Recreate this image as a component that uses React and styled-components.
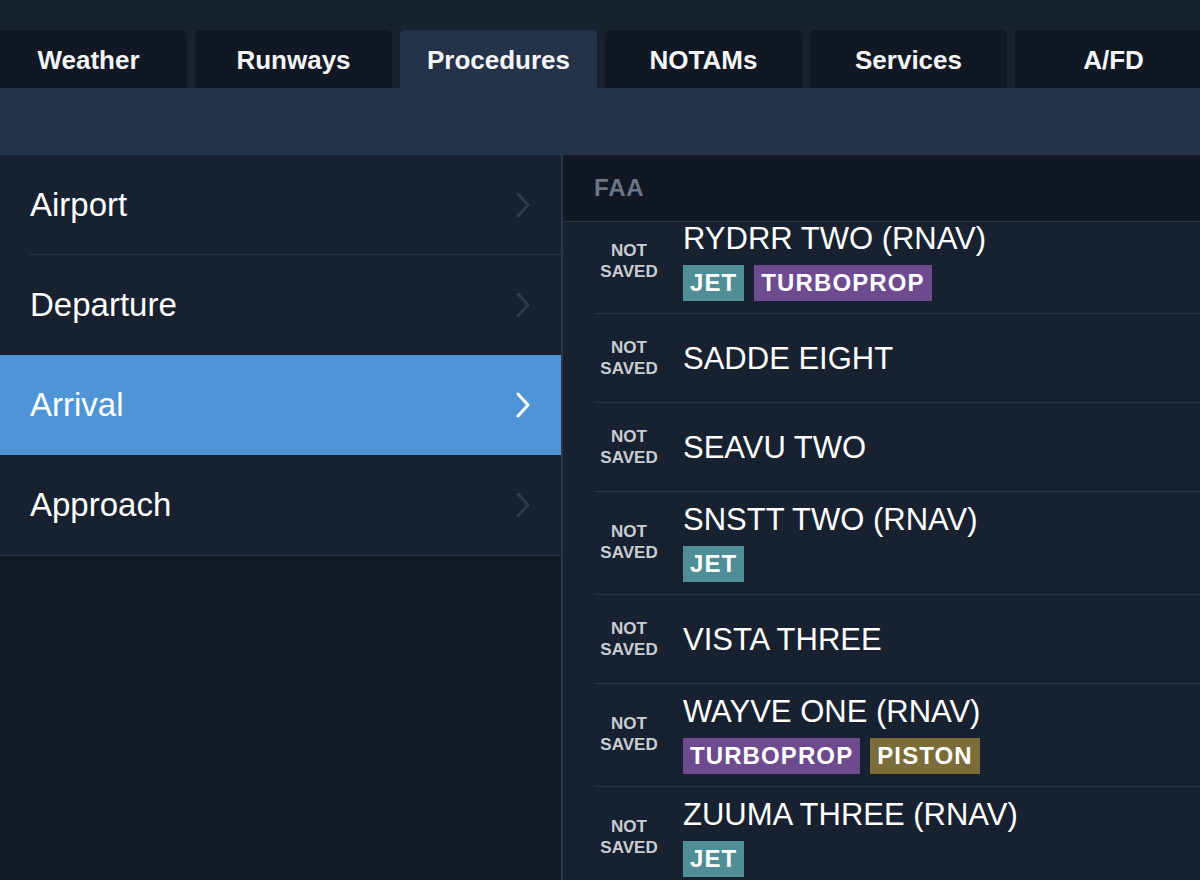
import React, { useEffect, useRef } from "react";
import styled, { createGlobalStyle } from "styled-components";

const GlobalStyle = createGlobalStyle`
  html, body {
    margin: 0;
    padding: 0;
    background: #121923;
  }
  body {
    font-family: "Liberation Sans", Arial, Helvetica, sans-serif;
    -webkit-font-smoothing: antialiased;
  }
`;

const COLOR_TOPBAR = "#18212e";
const COLOR_TAB = "#111824";
const COLOR_BAND = "#243349";
const COLOR_PANEL = "#172130";
const COLOR_LINE = "#2a3544";
const COLOR_SELECTED = "#4f95d5";

const BADGE_COLORS = {
  JET: "#4f8e96",
  TURBOPROP: "#6d4b8e",
  PISTON: "#7b6d39",
};

const Screen = styled.div`
  width: 1200px;
  height: 880px;
  overflow: hidden;
  display: flex;
  flex-direction: column;
  background: #121923;
`;

const TabStrip = styled.div`
  display: flex;
  gap: 8px;
  padding-top: 30px;
  margin-left: -10px;
  background: ${COLOR_TOPBAR};
  flex: 0 0 auto;
`;

const Tab = styled.div`
  flex: 0 0 197px;
  height: 58px;
  display: flex;
  align-items: center;
  justify-content: center;
  padding-top: 2px;
  box-sizing: border-box;
  border-radius: 5px 5px 0 0;
  background: ${(p) => (p.$active ? COLOR_BAND : COLOR_TAB)};
  color: #f4f5f7;
  font-size: 26px;
  font-weight: 700;
`;

const Band = styled.div`
  height: 67px;
  background: ${COLOR_BAND};
  flex: 0 0 auto;
`;

const Body = styled.div`
  flex: 1;
  display: flex;
  min-height: 0;
`;

const Sidebar = styled.div`
  width: 561px;
  flex: 0 0 561px;
  display: flex;
  flex-direction: column;
  background: #121923;
`;

const MenuList = styled.div`
  background: ${COLOR_PANEL};
  border-bottom: 1px solid ${COLOR_LINE};
`;

const MenuRow = styled.div`
  height: 100px;
  display: flex;
  align-items: center;
  justify-content: space-between;
  padding: 0 30px;
  background: ${(p) => (p.$selected ? COLOR_SELECTED : "transparent")};
  color: #ffffff;
  font-size: 33px;
  position: relative;

  &::after {
    content: "";
    display: ${(p) => (p.$divider ? "block" : "none")};
    position: absolute;
    left: 30px;
    right: 0;
    bottom: 0;
    height: 1px;
    background: ${COLOR_LINE};
  }
`;

const Chevron = ({ color }) => (
  <svg width="16" height="26" viewBox="0 0 16 26" fill="none">
    <polyline
      points="3,2 13,13 3,24"
      stroke={color}
      strokeWidth="3"
      strokeLinecap="round"
      strokeLinejoin="round"
    />
  </svg>
);

const Content = styled.div`
  flex: 1;
  display: flex;
  flex-direction: column;
  border-left: 2px solid #2b3646;
  background: ${COLOR_PANEL};
  min-width: 0;
`;

const SectionHeader = styled.div`
  height: 67px;
  flex: 0 0 67px;
  box-sizing: border-box;
  display: flex;
  align-items: center;
  padding-left: 31px;
  background: #111823;
  border-bottom: 1px solid ${COLOR_LINE};
  color: #6b7788;
  font-size: 24px;
  font-weight: 700;
  letter-spacing: 0.8px;
`;

const ProcList = styled.div`
  flex: 1;
  overflow: hidden;
`;

const ProcRow = styled.div`
  display: flex;
  align-items: center;
  min-height: 89px;
  box-sizing: border-box;
  padding: ${(p) => (p.$tall ? "9px 0 12px" : "10px 0")};
  margin-left: 31px;
  border-bottom: 1px solid ${COLOR_LINE};
`;

const Status = styled.div`
  width: 70px;
  flex: 0 0 70px;
  margin-right: 19px;
  text-align: center;
  color: #c9ced4;
  font-size: 17px;
  font-weight: 700;
  line-height: 21px;
`;

const ProcInfo = styled.div`
  display: flex;
  flex-direction: column;
  gap: 8px;
`;

const ProcName = styled.div`
  color: #ffffff;
  font-size: 31px;
  line-height: 37px;
  white-space: nowrap;
`;

const Badges = styled.div`
  display: flex;
  gap: 10px;
`;

const Badge = styled.span`
  display: inline-flex;
  align-items: center;
  height: 36px;
  padding: 0 7px;
  background: ${(p) => p.$color};
  color: #ffffff;
  font-size: 24px;
  font-weight: 700;
  letter-spacing: 1.1px;
`;

const TABS = ["Weather", "Runways", "Procedures", "NOTAMs", "Services", "A/FD"];

const MENU = ["Airport", "Departure", "Arrival", "Approach"];

const PROCEDURES = [
  { name: "RYDRR TWO (RNAV)", types: ["JET", "TURBOPROP"] },
  { name: "SADDE EIGHT", types: [] },
  { name: "SEAVU TWO", types: [] },
  { name: "SNSTT TWO (RNAV)", types: ["JET"] },
  { name: "VISTA THREE", types: [] },
  { name: "WAYVE ONE (RNAV)", types: ["TURBOPROP", "PISTON"] },
  { name: "ZUUMA THREE (RNAV)", types: ["JET"] },
];

export default function App() {
  const listRef = useRef(null);

  // list is scrolled a little past the first entry
  useEffect(() => {
    if (listRef.current) listRef.current.scrollTop = 11;
  }, []);

  const selected = "Arrival";

  return (
    <Screen>
      <GlobalStyle />
      <TabStrip>
        {TABS.map((t) => (
          <Tab key={t} $active={t === "Procedures"}>
            {t}
          </Tab>
        ))}
      </TabStrip>
      <Band />
      <Body>
        <Sidebar>
          <MenuList>
            {MENU.map((m, i) => {
              const isSel = m === selected;
              const next = MENU[i + 1];
              const divider = next && !isSel && next !== selected;
              return (
                <MenuRow key={m} $selected={isSel} $divider={divider}>
                  {m}
                  <Chevron color={isSel ? "#ffffff" : "#2f3b4b"} />
                </MenuRow>
              );
            })}
          </MenuList>
        </Sidebar>
        <Content>
          <SectionHeader>FAA</SectionHeader>
          <ProcList ref={listRef}>
            {PROCEDURES.map((p) => (
              <ProcRow key={p.name} $tall={p.types.length > 0}>
                <Status>
                  NOT
                  <br />
                  SAVED
                </Status>
                <ProcInfo>
                  <ProcName>{p.name}</ProcName>
                  {p.types.length > 0 && (
                    <Badges>
                      {p.types.map((t) => (
                        <Badge key={t} $color={BADGE_COLORS[t]}>
                          {t}
                        </Badge>
                      ))}
                    </Badges>
                  )}
                </ProcInfo>
              </ProcRow>
            ))}
          </ProcList>
        </Content>
      </Body>
    </Screen>
  );
}
